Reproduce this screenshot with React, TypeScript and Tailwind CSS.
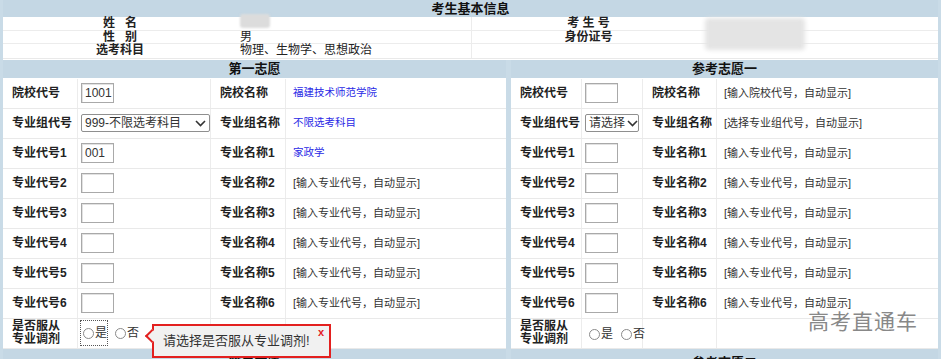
import React from "react";

type Cols = [number, number, number, number];

const LEFT_COLS: Cols = [75, 133, 75, 220];
const RIGHT_COLS: Cols = [71, 61, 74, 221];

type Row = {
    label: React.ReactNode;
    input: React.ReactNode;
    label2?: string;
    value?: React.ReactNode;
};

function Box({ text = "" }: { text?: string }) {
    return (
        <div className="flex h-[20px] w-[33px] items-center border border-[#a9a9a9] bg-white px-[3px] text-[12px] text-[#333] shadow-[inset_1px_1px_0_#e2e2e2]">
            {text}
        </div>
    );
}

function Select({ text, w }: { text: string; w: string }) {
    return (
        <div className={`flex h-[18px] items-center justify-between whitespace-nowrap rounded-[2px] border border-[#8f8f8f] bg-white pl-[3px] pr-[3px] text-[12px] text-[#333] ${w}`}>
            <span>{text}</span>
            <svg width="11" height="7" viewBox="0 0 11 7" className="ml-[2px] shrink-0">
                <path d="M1 1 L5.5 5.5 L10 1" fill="none" stroke="#333" strokeWidth="1.6" />
            </svg>
        </div>
    );
}

function Radio({ focus = false, label }: { focus?: boolean; label: string }) {
    return (
        <span className={`inline-flex items-center ${focus ? "outline outline-1 outline-dotted outline-[#555] py-[3px] pl-[2px]" : ""}`}>
            <span className="mr-[1px] inline-block h-[11px] w-[11px] rounded-full border border-[#8a8a8a] bg-white" />
            <span>{label}</span>
        </span>
    );
}

const hint = (t: string) => <span className="text-[11px] text-[#333]">[{t}]</span>;
const blue = (t: string) => <span className="text-[10.5px] text-[#2a2ae6]">{t}</span>;

function Panel({ title, cols, rows, footer }: { title: string; cols: Cols; rows: Row[]; footer: string }) {
    const total = cols.reduce((a, b) => a + b, 0);
    return (
        <div style={{ width: total }}>
            <div className="flex h-[19px] items-center justify-center border-b border-white bg-[#c4d7e4] text-[13px] font-bold text-[#111]">
                {title}
            </div>
            {rows.map((r, i) => (
                <div key={i} className="flex h-[30px] border-b border-[#e9e9e9]">
                    <div style={{ width: cols[0] }} className="flex items-center border-r border-[#ececec] pl-[9px] font-bold leading-[13px] text-[#222]">
                        {r.label}
                    </div>
                    <div style={{ width: cols[1] }} className="flex items-center border-r border-[#ececec] pl-[3px]">
                        {r.input}
                    </div>
                    <div style={{ width: cols[2] }} className="flex items-center border-r border-[#ececec] pl-[9px] font-bold text-[#222]">
                        {r.label2}
                    </div>
                    <div style={{ width: cols[3] }} className="flex items-center pl-[7px]">
                        {r.value}
                    </div>
                </div>
            ))}
            <div className="flex h-[19px] items-start justify-center bg-[#c4d7e4] pt-[4px] text-[13px] font-bold text-[#111]">
                {footer}
            </div>
        </div>
    );
}

function rowsFor(first: boolean): Row[] {
    const rows: Row[] = [
        {
            label: "院校代号",
            input: <Box text={first ? "1001" : ""} />,
            label2: "院校名称",
            value: first ? blue("福建技术师范学院") : hint("输入院校代号，自动显示"),
        },
        {
            label: "专业组代号",
            input: first ? <Select text="999-不限选考科目" w="w-[130px]" /> : <Select text="请选择" w="w-[54px]" />,
            label2: "专业组名称",
            value: first ? blue("不限选考科目") : hint("选择专业组代号，自动显示"),
        },
    ];
    for (let n = 1; n <= 6; n++) {
        rows.push({
            label: `专业代号${n}`,
            input: <Box text={first && n === 1 ? "001" : ""} />,
            label2: `专业名称${n}`,
            value: first && n === 1 ? blue("家政学") : hint("输入专业代号，自动显示"),
        });
    }
    rows.push({
        label: (
            <span>
                是否服从
                <br />
                专业调剂
            </span>
        ),
        input: (
            <span className={`flex items-center gap-[8px] text-[12px] text-[#333] ${first ? "" : "pl-[4px] pt-[2px]"}`}>
                <Radio focus={first} label="是" />
                <Radio label="否" />
            </span>
        ),
    });
    return rows;
}

export default function App() {
    return (
        <div className="relative h-[359px] w-[944px] overflow-hidden bg-white font-['Liberation_Sans','Noto_Sans_CJK_SC',sans-serif] text-[12px] text-[#222]">
            <div className="w-[941px] border-x-[3px] border-[#c9dbe7]">
                <div className="flex h-[17px] items-center justify-center bg-[#c4d7e4] text-[13px] font-bold text-[#111]">
                    考生基本信息
                </div>

                {/* 基本信息 */}
                <div className="flex border-b border-[#e9e9e9] text-[12px] leading-[13px]">
                    <div className="w-[469px] border-r border-[#ececec]">
                        <div className="flex h-[13.5px] border-b border-[#ececec]">
                            <div className="w-[234px] text-center font-bold">姓&nbsp;&nbsp;&nbsp;名</div>
                            <div className="pl-[3px]">
                                <div className="mt-[-3px] h-[14px] w-[30px] rounded-[3px] bg-[#dcdcdc] blur-[1px]" />
                            </div>
                        </div>
                        <div className="flex h-[13.5px] border-b border-[#ececec]">
                            <div className="w-[234px] text-center font-bold">性&nbsp;&nbsp;&nbsp;别</div>
                            <div className="pl-[3px]">男</div>
                        </div>
                        <div className="flex h-[13.5px]">
                            <div className="w-[234px] text-center font-bold">选考科目</div>
                            <div className="pl-[3px]">物理、生物学、思想政治</div>
                        </div>
                    </div>
                    <div className="flex-1">
                        <div className="flex h-[13.5px] border-b border-[#ececec]">
                            <div className="w-[233px] text-center font-bold">考&nbsp;生&nbsp;号</div>
                            <div className="relative">
                                <div className="absolute left-0 top-[1px] h-[32px] w-[100px] rounded-[4px] bg-[#e4e4e4] blur-[2px]" />
                            </div>
                        </div>
                        <div className="flex h-[13.5px] border-b border-[#ececec]">
                            <div className="w-[233px] text-center font-bold">身份证号</div>
                        </div>
                        <div className="h-[13.5px]" />
                    </div>
                </div>

                <div className="mt-[1px] flex">
                    <Panel title="第一志愿" cols={LEFT_COLS} rows={rowsFor(true)} footer="第二志愿" />
                    <div className="w-[5px] bg-[#c9dbe7]" />
                    <Panel title="参考志愿一" cols={RIGHT_COLS} rows={rowsFor(false)} footer="参考志愿二" />
                </div>
            </div>

            {/* 提示气泡 */}
            <div className="absolute left-[152px] top-[324px] flex h-[34px] w-[179px] items-center whitespace-nowrap border-2 border-[#e3201f] bg-[#f1f1f1] pl-[9px] text-[13px] text-[#333]">
                <span className="absolute left-[-7px] top-[5px] h-[10px] w-[10px] rotate-45 border-b-2 border-l-2 border-[#e3201f] bg-[#f1f1f1]" />
                请选择是否服从专业调剂!
                <span className="absolute right-[5px] top-[-2px] text-[11px] font-bold text-[#e3201f]">x</span>
            </div>

            {/* 水印 */}
            <div className="absolute left-[808px] top-[306px] text-[21px] tracking-[1px] text-[#888] [text-shadow:0_0_2px_#fff]">
                高考直通车
            </div>
        </div>
    );
}
